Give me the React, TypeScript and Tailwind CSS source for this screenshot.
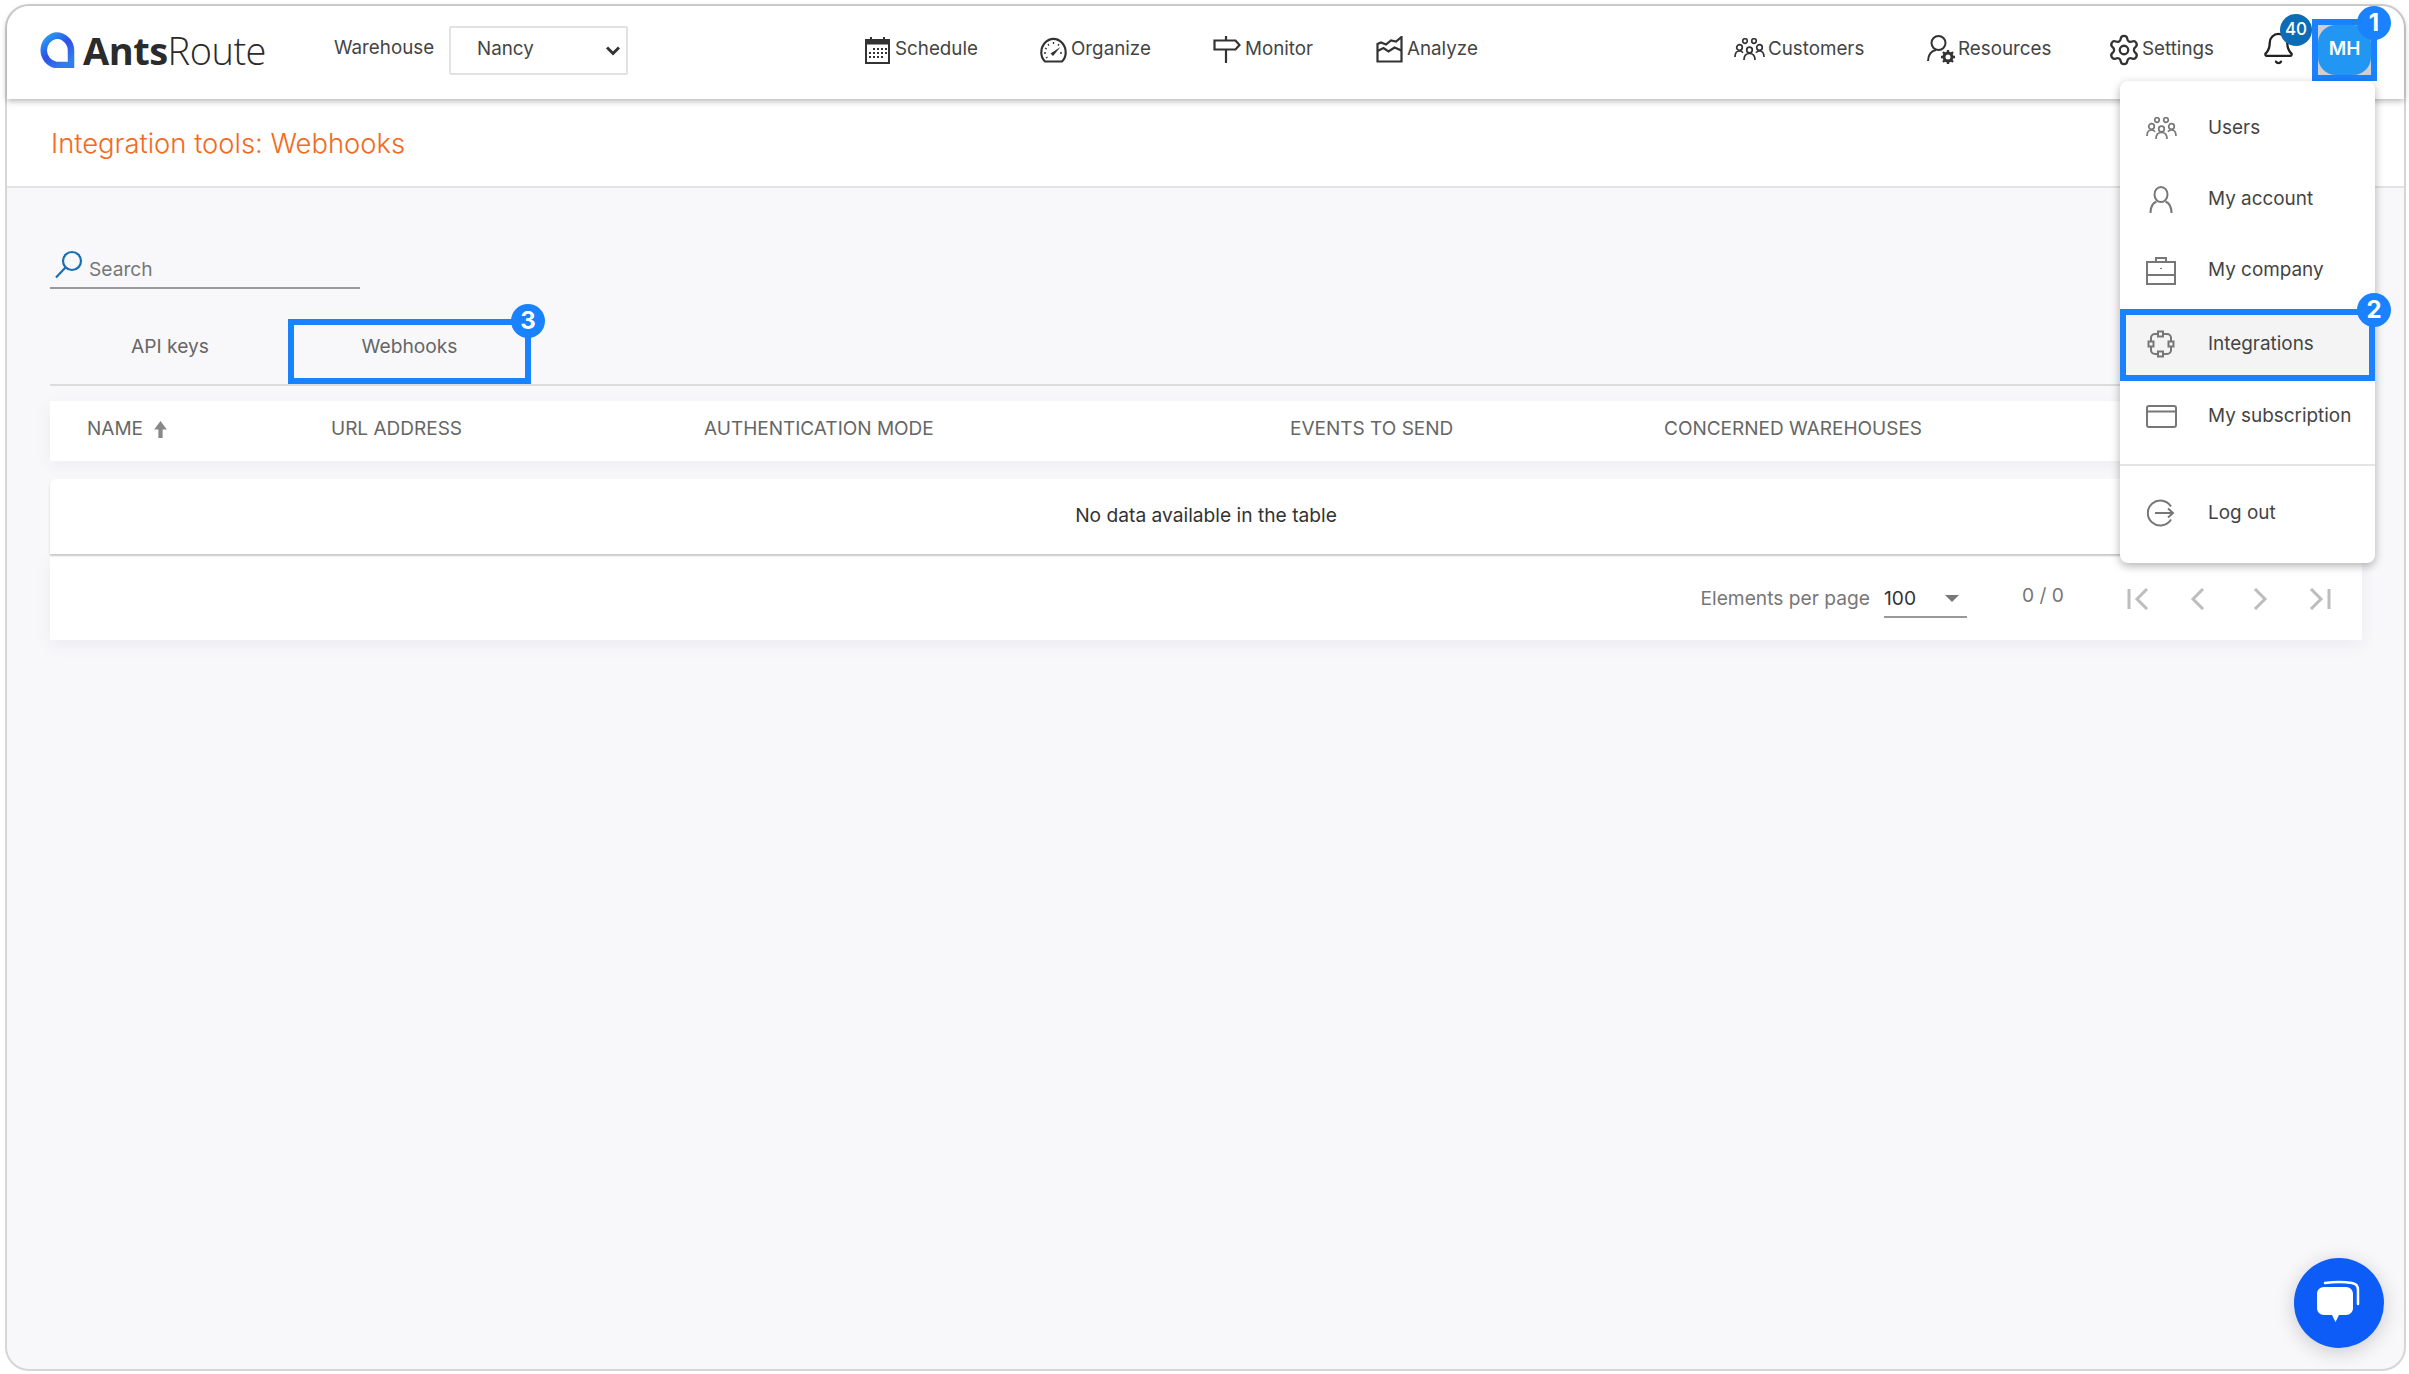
import { Bell, Settings } from 'lucide-react';

const People = ({ className }: { className: string }) => (
  <svg viewBox="0 0 31 23" fill="none" stroke="currentColor" strokeWidth="1.7" className={className}>
    <circle cx="11" cy="3" r="2.3" />
    <circle cx="20" cy="3" r="2.3" />
    <circle cx="5.5" cy="9.5" r="2.8" />
    <circle cx="25.5" cy="9.5" r="2.8" />
    <circle cx="15.5" cy="12" r="2.8" />
    <path d="M1 19c0-4 1.800-6 4.500-6 1.500 0 2.700.6 3.500 1.800M30 19c0-4-1.800-6-4.500-6-1.500 0-2.700.6-3.500 1.800M10 22c0-4 2-6.500 5.500-6.500S21 18 21 22" />
  </svg>
);

const ScheduleIcon = () => (
  <svg viewBox="0 0 25 28" className="h-[28px] w-[25px] text-[#333]">
    <path d="M1 4h23v23H1z" fill="none" stroke="currentColor" strokeWidth="2" />
    <path d="M1 4h23v4.500H1z" fill="currentColor" />
    <path d="M6 1v5M19 1v5" stroke="currentColor" strokeWidth="2" />
    <path d="M8 12h2v2H8zM12 12h2v2h-2zM16 12h2v2h-2zM20 12h2v2h-2zM4 16h2v2H4zM8 16h2v2H8zM12 16h2v2h-2zM16 16h2v2h-2zM20 16h2v2h-2zM4 20h2v2H4zM8 20h2v2H8zM12 20h2v2h-2zM16 20h2v2h-2z" fill="currentColor" />
  </svg>
);

const OrganizeIcon = () => (
  <svg viewBox="0 0 27 26" className="h-[26px] w-[27px] text-[#333]">
    <path d="M5 24.500C2.500 22 1.300 19 1.300 15.500 1.300 8 7 1.800 13.500 1.800S25.700 8 25.700 15.500c0 3.500-1.200 6.500-3.700 9z" fill="none" stroke="currentColor" strokeWidth="2.2" />
    <path d="M10.500 16.500l10-6.500-7.500 9z" fill="currentColor" />
    <path d="M13.500 5v2M8 7l1 1.700M5 11l1.700 1M4 16h2M19 7l-1 1.700M22 16h-2M6 21l1.500-1" stroke="currentColor" strokeWidth="1.300" />
  </svg>
);

const MonitorIcon = () => (
  <svg viewBox="0 0 28 27" fill="none" stroke="#333" strokeWidth="2.200" className="h-[27px] w-[28px]">
    <path d="M1.500 4.500h21l4 4.500-4 4.500h-21z" />
    <path d="M13 0v4.500M13 13.500V27" />
  </svg>
);

const AnalyzeIcon = () => (
  <svg viewBox="0 0 27 27" fill="none" stroke="#333" strokeWidth="2.200" className="h-[27px] w-[27px]">
    <path d="M1.500 8v17.500h24V1l-5.500 4.500-5-1-5 4-5-2z" />
    <path d="M1.500 15l6-3 5 3.500 6-4 7 3" />
  </svg>
);

const ResourcesIcon = () => (
  <svg viewBox="0 0 30 32" fill="none" className="h-[32px] w-[30px] text-[#333]" stroke="currentColor">
    <circle cx="11.500" cy="9" r="7" strokeWidth="2" />
    <path d="M1 27c0-6 3.500-10.500 8-11" strokeWidth="2" />
    <circle cx="21" cy="23" r="4" strokeWidth="3" />
    <path d="M21 16v3M21 27v3M14 23h3M25 23h3M16 18l2 2M24 26l2 2M26 18l-2 2M18 26l-2 2" strokeWidth="2.400" />
  </svg>
);

const UserIcon = () => (
  <svg viewBox="0 0 24 28" fill="none" stroke="#777" strokeWidth="2" className="h-[28px] w-[24px]">
    <ellipse cx="12" cy="8.500" rx="6.500" ry="7.500" />
    <path d="M1.500 27c0-6 2.500-10 6-11.500M22.500 27c0-6-2.500-10-6-11.500" />
  </svg>
);

const CompanyIcon = () => (
  <svg viewBox="0 0 30 28" fill="none" stroke="#777" strokeWidth="2" className="h-[28px] w-[30px]">
    <path d="M1 5h28v22H1zM1 18h28M10 5V1h10v4" />
    <path d="M15 11v1" />
  </svg>
);

const IntegrationsIcon = () => (
  <svg viewBox="0 0 28 28" fill="none" stroke="#777" strokeWidth="2" className="h-[28px] w-[28px]">
    <path d="M11 4H8a4 4 0 0 0-4 4v3M17 4h3a4 4 0 0 1 4 4v3M4 17v3a4 4 0 0 0 4 4h3M24 17v3a4 4 0 0 1-4 4h-3" />
    <path d="M11 1.500h5v5h-5zM11 21.500h5v5h-5zM1.500 11.500h5v5h-5zM21.500 11.500h5v5h-5z" />
  </svg>
);

const CardIcon = () => (
  <svg viewBox="0 0 31 23" fill="none" stroke="#777" strokeWidth="2" className="h-[23px] w-[31px]">
    <rect x="1" y="1" width="29" height="21" rx="2" />
    <path d="M1 6.500h29" />
  </svg>
);

const LogOutIcon = () => (
  <svg viewBox="0 0 28 28" fill="none" stroke="#777" strokeWidth="2" className="h-[28px] w-[28px]">
    <path d="M24 7.500A12.500 12.500 0 1 0 24 20.500" />
    <path d="M8 14h18M21 9.500l5 4.500-5 4.500" />
  </svg>
);

const Logo = () => (
  <svg viewBox="0 0 37 36" fill="none" className="h-[36px] w-[37px]">
    <defs>
      <linearGradient id="logoBlue" x1="0" y1="0" x2="0.7" y2="1">
        <stop offset="0" stopColor="#27a4f6" />
        <stop offset="0.55" stopColor="#2f50e6" />
        <stop offset="1" stopColor="#2f7cf0" />
      </linearGradient>
    </defs>
    <path d="M18 3.500a15 15 0 0 1 15 15V33H18a15 15 0 0 1 0-29.500z" stroke="url(#logoBlue)" strokeWidth="6.500" />
  </svg>
);

const PageIcon = ({ d }: { d: string }) => (
  <svg viewBox="0 0 24 22" fill="none" stroke="#bdbdbd" strokeWidth="3" className="h-[22px] w-[24px]">
    <path d={d} />
  </svg>
);

const Badge = ({ n, className }: { n: number; className: string }) => (
  <span className={`absolute z-20 flex h-[34px] w-[34px] items-center justify-center rounded-full bg-[#1a82ff] text-[24px] font-bold text-white ${className}`}>
    {n}
  </span>
);

const navItems = [
  { label: 'Schedule', icon: <ScheduleIcon />, className: 'w-[175px] gap-[5px]' },
  { label: 'Organize', icon: <OrganizeIcon />, className: 'w-[173px] gap-[4px]' },
  { label: 'Monitor', icon: <MonitorIcon />, className: 'w-[163px] gap-[4px]' },
  { label: 'Analyze', icon: <AnalyzeIcon />, className: 'w-[358px] gap-[4px]' },
  { label: 'Customers', icon: <People className="h-[23px] w-[31px] text-[#333]" />, className: 'w-[193px] gap-[3px]' },
  { label: 'Resources', icon: <ResourcesIcon />, className: 'w-[183px] gap-[1px]' },
  {
    label: 'Settings',
    icon: <Settings className="-ml-[3px] h-[34px] w-[34px]" strokeWidth={1.6} color="#333" />,
    className: 'w-[157px] gap-[1px]',
  },
];

const MenuRow = ({ icon, label, className = 'h-[71px]' }: { icon: React.ReactNode; label: string; className?: string }) => (
  <div className={`relative flex items-center ${className}`}>
    <div className="ml-[24px] flex w-[34px] justify-center">{icon}</div>
    <span className="ml-[30px] text-[18.9px] text-[#444]">{label}</span>
  </div>
);

export default function App() {
  return (
    <div className="h-[1374px] w-[2409px] overflow-hidden bg-white pl-[5px] pt-[4px] text-[19.2px] font-['Inter',sans-serif]">
      <div className="relative flex h-[1367px] w-[2401px] flex-col rounded-[24px] border-2 border-[#d6d6d6] bg-[#f8f8fb]">
        {/* Top bar */}
        <header className="relative flex h-[93px] shrink-0 items-center rounded-t-[22px] bg-white pl-[31px] text-[18.8px] text-[#444] shadow-[0_2px_6px_rgba(0,0,0,0.3)]">
          <div className="-mt-[6px] flex w-[296px] items-center gap-[8px]">
            <Logo />
            <span className="text-[38px] leading-none tracking-[-0.5px] text-[#2b2b2b] font-['Open_Sans',sans-serif]">
              <span className="font-bold">Ants</span>
              <span className="font-light">Route</span>
            </span>
          </div>
          <span className="-mt-[8px] w-[115px]">Warehouse</span>
          <div className="relative -mt-[4px] mr-[237px]">
            <select
              defaultValue="Nancy"
              className="h-[49px] w-[179px] appearance-none rounded-[2px] border-2 border-[#e2e2e2] bg-white pb-[2px] pl-[26px] text-[#444]"
            >
              <option>Nancy</option>
            </select>
            <svg viewBox="0 0 14 10" fill="none" stroke="#333" strokeWidth="3" className="absolute right-[8px] top-[20px] h-[10px] w-[14px]">
              <path d="M1 1.500l6 6 6-6" />
            </svg>
          </div>
          {navItems.map((item) => (
            <div key={item.label} className={`-mt-[6px] flex items-center ${item.className}`}>
              {item.icon}
              <span>{item.label}</span>
            </div>
          ))}
          <div className="relative -mt-[8px] w-[45px]">
            <Bell className="-ml-[6px] h-[35px] w-[35px]" strokeWidth={1.6} color="#222" />
            <span className="absolute -top-[17px] left-[13px] flex h-[32px] w-[32px] items-center justify-center rounded-full bg-[#0d6cb4] text-[17px] font-medium text-white">
              40
            </span>
          </div>
          <div className="relative -mt-[6px] h-[62px] w-[65px] border-[6px] border-[#1a82ff] bg-[#cfcfcf]">
            <div className="flex h-full w-full items-center justify-center rounded-[18px] bg-[#2196f3] text-[19px] font-semibold text-white">
              MH
            </div>
            <Badge n={1} className="-right-[20px] -top-[19px]" />
          </div>
        </header>

        {/* Title */}
        <div className="flex h-[89px] shrink-0 items-center border-b-2 border-[#e3e3e6] bg-white pl-[44px] pt-[2px] text-[27.4px] font-light text-[#f26a21]">
          Integration tools: Webhooks
        </div>

        {/* Page body */}
        <main className="ml-[43px] w-[2312px] pt-[60px]">
          <div className="flex h-[41px] w-[310px] items-end gap-[6px] border-b-2 border-[#999] pb-[3px] pl-[4px]">
            <svg viewBox="0 0 29 29" fill="none" stroke="#1a6fb0" strokeWidth="2.200" className="mb-[5px] h-[29px] w-[29px] shrink-0">
              <circle cx="18" cy="11" r="9" />
              <path d="M11.500 17.500L2 27.500" />
            </svg>
            <input placeholder="Search" className="w-full bg-transparent text-[19.2px] outline-none placeholder:text-[#777]" />
          </div>

          <div className="mt-[30px] flex h-[67px] border-b-2 border-[#dcdcdf] text-[#666]">
            <div className="flex w-[240px] items-center justify-center pb-[10px]">API keys</div>
            <div className="relative -ml-[2px] flex h-[65px] w-[243px] items-center justify-center border-[6px] border-[#1a82ff] pb-[10px]">
              Webhooks
              <Badge n={3} className="-right-[20px] -top-[21px]" />
            </div>
          </div>

          <div className="mt-[15px] grid h-[60px] grid-cols-[244px_373px_586px_374px_1fr] items-center bg-white pb-[3px] pl-[37px] text-[19px] text-[#666] shadow-[0_4px_16px_rgba(60,60,90,0.06)]">
            <div className="flex items-center gap-[10px]">
              NAME
              <svg viewBox="0 0 14 16" className="h-[17px] w-[15px]" fill="#888">
                <path d="M7 0l6 8H9v8H5V8H1z" />
              </svg>
            </div>
            <div>URL ADDRESS</div>
            <div>AUTHENTICATION MODE</div>
            <div>EVENTS TO SEND</div>
            <div>CONCERNED WAREHOUSES</div>
          </div>

          <div className="relative z-[1] mt-[18px] flex h-[75px] items-center justify-center rounded-t-[6px] bg-white pb-[3px] text-[#333] shadow-[0_2px_2px_rgba(0,0,0,0.22)]">
            No data available in the table
          </div>

          <div className="flex h-[86px] items-center justify-end bg-white pr-[31px] pt-[3px] shadow-[0_6px_16px_rgba(60,60,90,0.06)]">
            <span className="text-[#777]">Elements per page</span>
            <div className="ml-[14px] flex h-[38px] w-[83px] items-center justify-between border-b-2 border-[#999] pr-[8px] pt-[2px] text-[#333]">
              100
              <span className="h-0 w-0 border-x-[7px] border-t-[7px] border-x-transparent border-t-[#777]" />
            </div>
            <span className="mb-[6px] ml-[55px] w-[105px] text-[#777]">0 / 0</span>
            <div className="flex w-[204px] justify-between">
              <PageIcon d="M2 1v20M20 1l-10 10 10 10" />
              <PageIcon d="M16 1L6 11l10 10" />
              <PageIcon d="M8 1l10 10L8 21" />
              <PageIcon d="M22 1v20M4 1l10 10L4 21" />
            </div>
          </div>
        </main>

        {/* User menu */}
        <div className="absolute left-[2113px] top-[75px] z-10 h-[482px] w-[255px] rounded-[8px] bg-white pt-[12px] shadow-[0_3px_10px_rgba(0,0,0,0.3)]">
          <MenuRow icon={<People className="h-[23px] w-[31px] text-[#777]" />} label="Users" />
          <MenuRow icon={<UserIcon />} label="My account" />
          <MenuRow icon={<CompanyIcon />} label="My company" />
          <MenuRow
            icon={<IntegrationsIcon />}
            label="Integrations"
            className="mt-[3px] h-[72px] bg-[#f4f4f4] pb-[2px] shadow-[inset_0_0_0_6px_#1a82ff]"
          />
          <div className="relative">
            <Badge n={2} className="-right-[16px] -top-[88px]" />
          </div>
          <MenuRow icon={<CardIcon />} label="My subscription" className="h-[72px] pb-[2px]" />
          <div className="mt-[11px] h-[2px] bg-[#e4e4e4]" />
          <MenuRow icon={<LogOutIcon />} label="Log out" className="h-[96px] pb-[2px]" />
        </div>

        {/* Chat button */}
        <div className="absolute bottom-[21px] right-[20px] z-10 flex h-[90px] w-[90px] items-center justify-center rounded-full bg-[#0d5cf7] shadow-[0_4px_20px_rgba(0,0,0,0.18)]">
          <svg viewBox="0 0 46 46" className="h-[46px] w-[46px]" fill="none">
            <path d="M9 3c8-1 20-1 27 0 4 .6 6 3 6 7v14" stroke="#fff" strokeWidth="2.500" strokeLinecap="round" />
            <path d="M8 7h22c4 0 7 3 7 7v14c0 4-3 7-7 7h-7l-3.500 7-3.500-7H8c-4 0-7-3-7-7V14c0-4 3-7 7-7z" fill="#fff" />
          </svg>
        </div>
      </div>
    </div>
  );
}
